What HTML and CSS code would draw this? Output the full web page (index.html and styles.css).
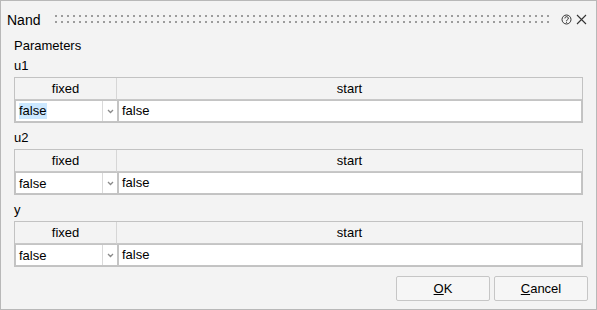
FILE: index.html
```html
<!DOCTYPE html>
<html>
<head>
<meta charset="utf-8">
<link rel="stylesheet" href="styles.css">
</head>
<body>
<div class="window">
  <div class="titlebar">
    <span class="title">Nand</span>
    <span class="grip"></span>
    <svg class="icon help" width="11" height="11" viewBox="0 0 11 11">
      <circle cx="5.5" cy="5.5" r="4.5" fill="none" stroke="#333" stroke-width="1"/>
      <path d="M3.9 4.4 A1.7 1.7 0 1 1 6.3 5.9 C5.7 6.2 5.5 6.5 5.5 7.1" fill="none" stroke="#333" stroke-width="1"/>
      <rect x="5" y="7.8" width="1" height="1" fill="#333"/>
    </svg>
    <svg class="icon close" width="11" height="11" viewBox="0 0 11 11">
      <path d="M1 1 L10 10 M10 1 L1 10" stroke="#333" stroke-width="1.1" fill="none"/>
    </svg>
  </div>
  <div class="content">
    <div class="label">Parameters</div>

    <div class="label">u1</div>
    <div class="ptable">
      <div class="hcell first">fixed</div>
      <div class="hcell">start</div>
      <div class="combo"><span class="ctext"><span class="sel">false</span></span><span class="cbtn"><svg width="7" height="5" viewBox="0 0 7 5"><path d="M1 1 L3.5 3.5 L6 1" stroke="#8a8a8a" stroke-width="1.3" fill="none"/></svg></span></div>
      <div class="edit">false</div>
    </div>

    <div class="label gap">u2</div>
    <div class="ptable">
      <div class="hcell first">fixed</div>
      <div class="hcell">start</div>
      <div class="combo"><span class="ctext">false</span><span class="cbtn"><svg width="7" height="5" viewBox="0 0 7 5"><path d="M1 1 L3.5 3.5 L6 1" stroke="#8a8a8a" stroke-width="1.3" fill="none"/></svg></span></div>
      <div class="edit">false</div>
    </div>

    <div class="label gap">y</div>
    <div class="ptable">
      <div class="hcell first">fixed</div>
      <div class="hcell">start</div>
      <div class="combo"><span class="ctext">false</span><span class="cbtn"><svg width="7" height="5" viewBox="0 0 7 5"><path d="M1 1 L3.5 3.5 L6 1" stroke="#8a8a8a" stroke-width="1.3" fill="none"/></svg></span></div>
      <div class="edit">false</div>
    </div>
  </div>
  <div class="footer">
    <button class="btn"><u>O</u>K</button>
    <button class="btn"><u>C</u>ancel</button>
  </div>
</div>
</body>
</html>
```
FILE: styles.css
```css
html, body {
  margin: 0;
  padding: 0;
  background: #f3f3f3;
}
.window {
  width: 597px;
  height: 310px;
  box-sizing: border-box;
  border: 1px solid #b8b8b8;
  background: #f3f3f3;
  display: flex;
  flex-direction: column;
  font-family: "Liberation Sans", Arial, sans-serif;
  font-size: 13px;
  color: #000;
}
.titlebar {
  height: 35px;
  display: flex;
  align-items: center;
  padding: 0 9px 0 6px;
}
.title {
  font-size: 14px;
  line-height: 16px;
  padding-top: 2px;
  color: #000;
}
.grip {
  flex: 1;
  height: 8px;
  margin: 1px 12px 0 15px;
  background-image:
    linear-gradient(to right, transparent 2px, #f3f3f3 2px),
    linear-gradient(to bottom, #9c9c9c 2px, transparent 2px);
  background-size: 6px 6px;
}
.icon {
  display: block;
  margin-top: 1px;
}
.help {
  margin-right: 4px;
}
.content {
  padding: 0 13px;
}
.label {
  height: 20px;
  line-height: 20px;
}
.label.gap {
  margin-top: 5px;
}
.ptable {
  margin-top: 1px;
  display: grid;
  grid-template-columns: 102px 1fr;
  border: 1px solid #c2c2c2;
  background: #f3f3f3;
}
.hcell {
  height: 21px;
  line-height: 21px;
  text-align: center;
  border-bottom: 1px solid #c8c8c8;
}
.hcell.first {
  border-right: 1px solid #d6d6d6;
}
.combo {
  height: 22px;
  box-sizing: border-box;
  border: 1px solid #c4c4c4;
  background: #fff;
  display: flex;
  align-items: stretch;
  width: 103px;
}
.ctext {
  flex: 1;
  padding-left: 3px;
  display: flex;
  align-items: center;
}
.sel {
  background: #cce8ff;
  line-height: 16px;
  padding-right: 1px;
}
.cbtn {
  width: 14px;
  border-left: 1px solid #dadada;
  display: flex;
  align-items: center;
  justify-content: center;
}
.edit {
  height: 22px;
  box-sizing: border-box;
  border: 1px solid #c4c4c4;
  background: #fff;
  line-height: 20px;
  padding-left: 3px;
  margin-left: 1px;
}
.footer {
  margin-top: auto;
  display: flex;
  justify-content: flex-end;
  gap: 4px;
  padding: 0 8px 8px 0;
}
.btn {
  width: 94px;
  height: 25px;
  box-sizing: border-box;
  border: 1px solid #c6c6c6;
  border-radius: 2px;
  background: #f6f6f6;
  font-family: "Liberation Sans", Arial, sans-serif;
  font-size: 13px;
  color: #000;
  padding: 0;
}
```
